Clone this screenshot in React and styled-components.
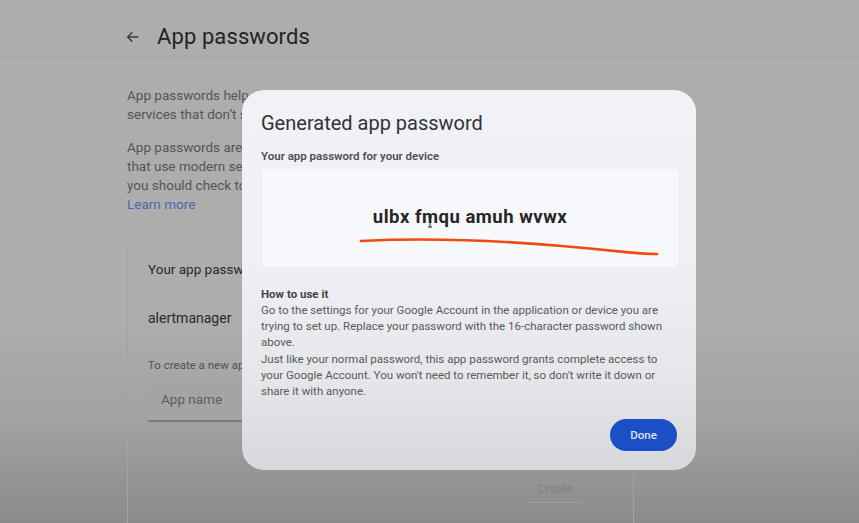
import styled, { createGlobalStyle } from "styled-components";

const GlobalStyle = createGlobalStyle`
    html, body {
        margin: 0;
        padding: 0;
        background: #8c8c8c;
    }
    body {
        font-family: Roboto, "Open Sans", Arial, sans-serif;
    }
`

const Screen = styled.div`
    position: relative;
    width: 859px;
    height: 523px;
    overflow: hidden;
    background: linear-gradient(180deg, #adadad 0%, #adadad 62%, #a2a2a2 80%, #8b8b8b 100%);
    color: #2a2a2a;
`

const Header = styled.header`
    display: flex;
    align-items: center;
    gap: 16px;
    height: 58px;
    padding: 16px 0 0 125px;
    border-bottom: 1px solid #a1a1a1;
    box-sizing: border-box;
`

const Title = styled.h1`
    margin: 0;
    font-size: 22px;
    font-weight: 400;
    color: #232323;
    letter-spacing: 0.1px;
`

const Main = styled.main`
    width: 507px;
    margin-left: 127px;
    padding-top: 28px;
`

const Para = styled.p`
    margin: 0 0 14px;
    font-size: 13.5px;
    line-height: 19px;
    color: #555;
    white-space: nowrap;
`

const LearnLink = styled.a`
    display: block;
    font-size: 13.5px;
    line-height: 19px;
    color: #4b6aa8;
    text-decoration: none;
    margin-top: -14px;
`

const Card = styled.section`
    margin-top: 27px;
    border-left: 1px solid #a3a3a3;
    border-right: 1px solid #a3a3a3;
    border-top: 1px solid #a6a6a6;
    border-radius: 8px 8px 0 0;
    padding: 19px 18px 40px 20px;
    height: 300px;
`

const CardTitle = styled.div`
    font-size: 13.5px;
    color: #2a2a2a;
`

const AppRow = styled.div`
    margin-top: 33px;
    font-size: 14px;
    color: #2a2a2a;
`

const Hint = styled.div`
    margin-top: 32px;
    font-size: 11.5px;
    color: #525252;
`

const InputBox = styled.div`
    margin-top: 6px;
    width: 300px;
    height: 42px;
    background: #a4a4a4;
    border-bottom: 2px solid #7a7a7a;
    border-radius: 4px 4px 0 0;
    display: flex;
    align-items: center;
    padding-left: 13px;
    font-size: 13.5px;
    color: #5e5e5e;
`

const CreateRow = styled.div`
    display: flex;
    justify-content: flex-end;
    margin-top: 54px;
    padding-right: 32px;
`

const GhostButton = styled.div`
    font-size: 12px;
    font-weight: 500;
    color: #858585;
    padding: 6px 10px;
    border-bottom: 1px solid #9d9d9d;
`

const Dialog = styled.div`
    position: absolute;
    left: 242px;
    top: 90px;
    width: 454px;
    height: 380px;
    box-sizing: border-box;
    border-radius: 22px;
    background: linear-gradient(180deg, #f1f2f7 0%, #eef0f5 45%, #e5e7eb 75%, #d6d8dc 100%);
    padding: 20px 19px 19px;
    display: flex;
    flex-direction: column;
`

const DialogTitle = styled.h2`
    margin: 0;
    font-size: 20px;
    font-weight: 400;
    color: #333;
    line-height: 26px;
`

const SubLabel = styled.div`
    margin-top: 13px;
    font-size: 11.5px;
    font-weight: 600;
    color: #4f4f4f;
`

const PasswordBox = styled.div`
    position: relative;
    margin-top: 6px;
    height: 98px;
    width: 416px;
    margin-left: 1px;
    background: #f7f8fb;
    border-radius: 4px;
    display: flex;
    align-items: center;
    justify-content: center;
`

const Password = styled.span`
    font-size: 18.5px;
    font-weight: 700;
    color: #262626;
    letter-spacing: 0.5px;
    margin-top: -2px;
`

const Scribble = styled.svg`
    position: absolute;
    left: 0;
    top: 0;
`

const HowTitle = styled.div`
    margin-top: 19px;
    font-size: 11.5px;
    font-weight: 700;
    color: #444;
    line-height: 16px;
`

const HowText = styled.p`
    margin: 0;
    font-size: 11.5px;
    line-height: 16.2px;
    color: #5a5a5a;
    white-space: nowrap;
`

const Actions = styled.div`
    margin-top: auto;
    display: flex;
    justify-content: flex-end;
`

const DoneButton = styled.button`
    width: 67px;
    height: 32px;
    border: none;
    border-radius: 16px;
    background: #1b4fc6;
    color: #dfe6f7;
    font-family: inherit;
    font-size: 11.5px;
    font-weight: 500;
`

const BackArrow = () => (
    <svg width="16" height="16" viewBox="0 0 24 24" fill="none" stroke="#3a3a3a" strokeWidth="2">
        <path d="M20 12H4M11 5l-7 7 7 7" />
    </svg>
)

const App = () => {
    return (
        <Screen>
            <GlobalStyle />
            <Header>
                <BackArrow />
                <Title>App passwords</Title>
            </Header>
            <Main>
                <Para>
                    App passwords help you sign into your Google Account on older apps and<br />
                    services that don’t support modern security standards.
                </Para>
                <Para>
                    App passwords are less secure than using up-to-date apps and services<br />
                    that use modern security standards. Before you create an app password,<br />
                    you should check to see if your app needs this in order to sign in.
                </Para>
                <LearnLink href="#">Learn more</LearnLink>
                <Card>
                    <CardTitle>Your app passwords</CardTitle>
                    <AppRow>alertmanager</AppRow>
                    <Hint>To create a new app specific password, type a name for it below...</Hint>
                    <InputBox>App name</InputBox>
                    <CreateRow>
                        <GhostButton>Create</GhostButton>
                    </CreateRow>
                </Card>
            </Main>

            <Dialog>
                <DialogTitle>Generated app password</DialogTitle>
                <SubLabel>Your app password for your device</SubLabel>
                <PasswordBox>
                    <Password>ulbx fmqu amuh wvwx</Password>
                    <Scribble width="416" height="98" viewBox="0 0 416 98">
                        <path d="M99 72 C 160 69, 230 71, 300 77 S 370 85, 395 85" fill="none" stroke="#f04a0c" strokeWidth="2.6" strokeLinecap="round" />
                        <path d="M168 48 v10 M166 48 h4 M166 58 h4" stroke="#222" strokeWidth="1" fill="none" />
                    </Scribble>
                </PasswordBox>
                <HowTitle>How to use it</HowTitle>
                <HowText>
                    Go to the settings for your Google Account in the application or device you are<br />
                    trying to set up. Replace your password with the 16-character password shown<br />
                    above.<br />
                    Just like your normal password, this app password grants complete access to<br />
                    your Google Account. You won't need to remember it, so don't write it down or<br />
                    share it with anyone.
                </HowText>
                <Actions>
                    <DoneButton>Done</DoneButton>
                </Actions>
            </Dialog>
        </Screen>
    )
}

export default App;
